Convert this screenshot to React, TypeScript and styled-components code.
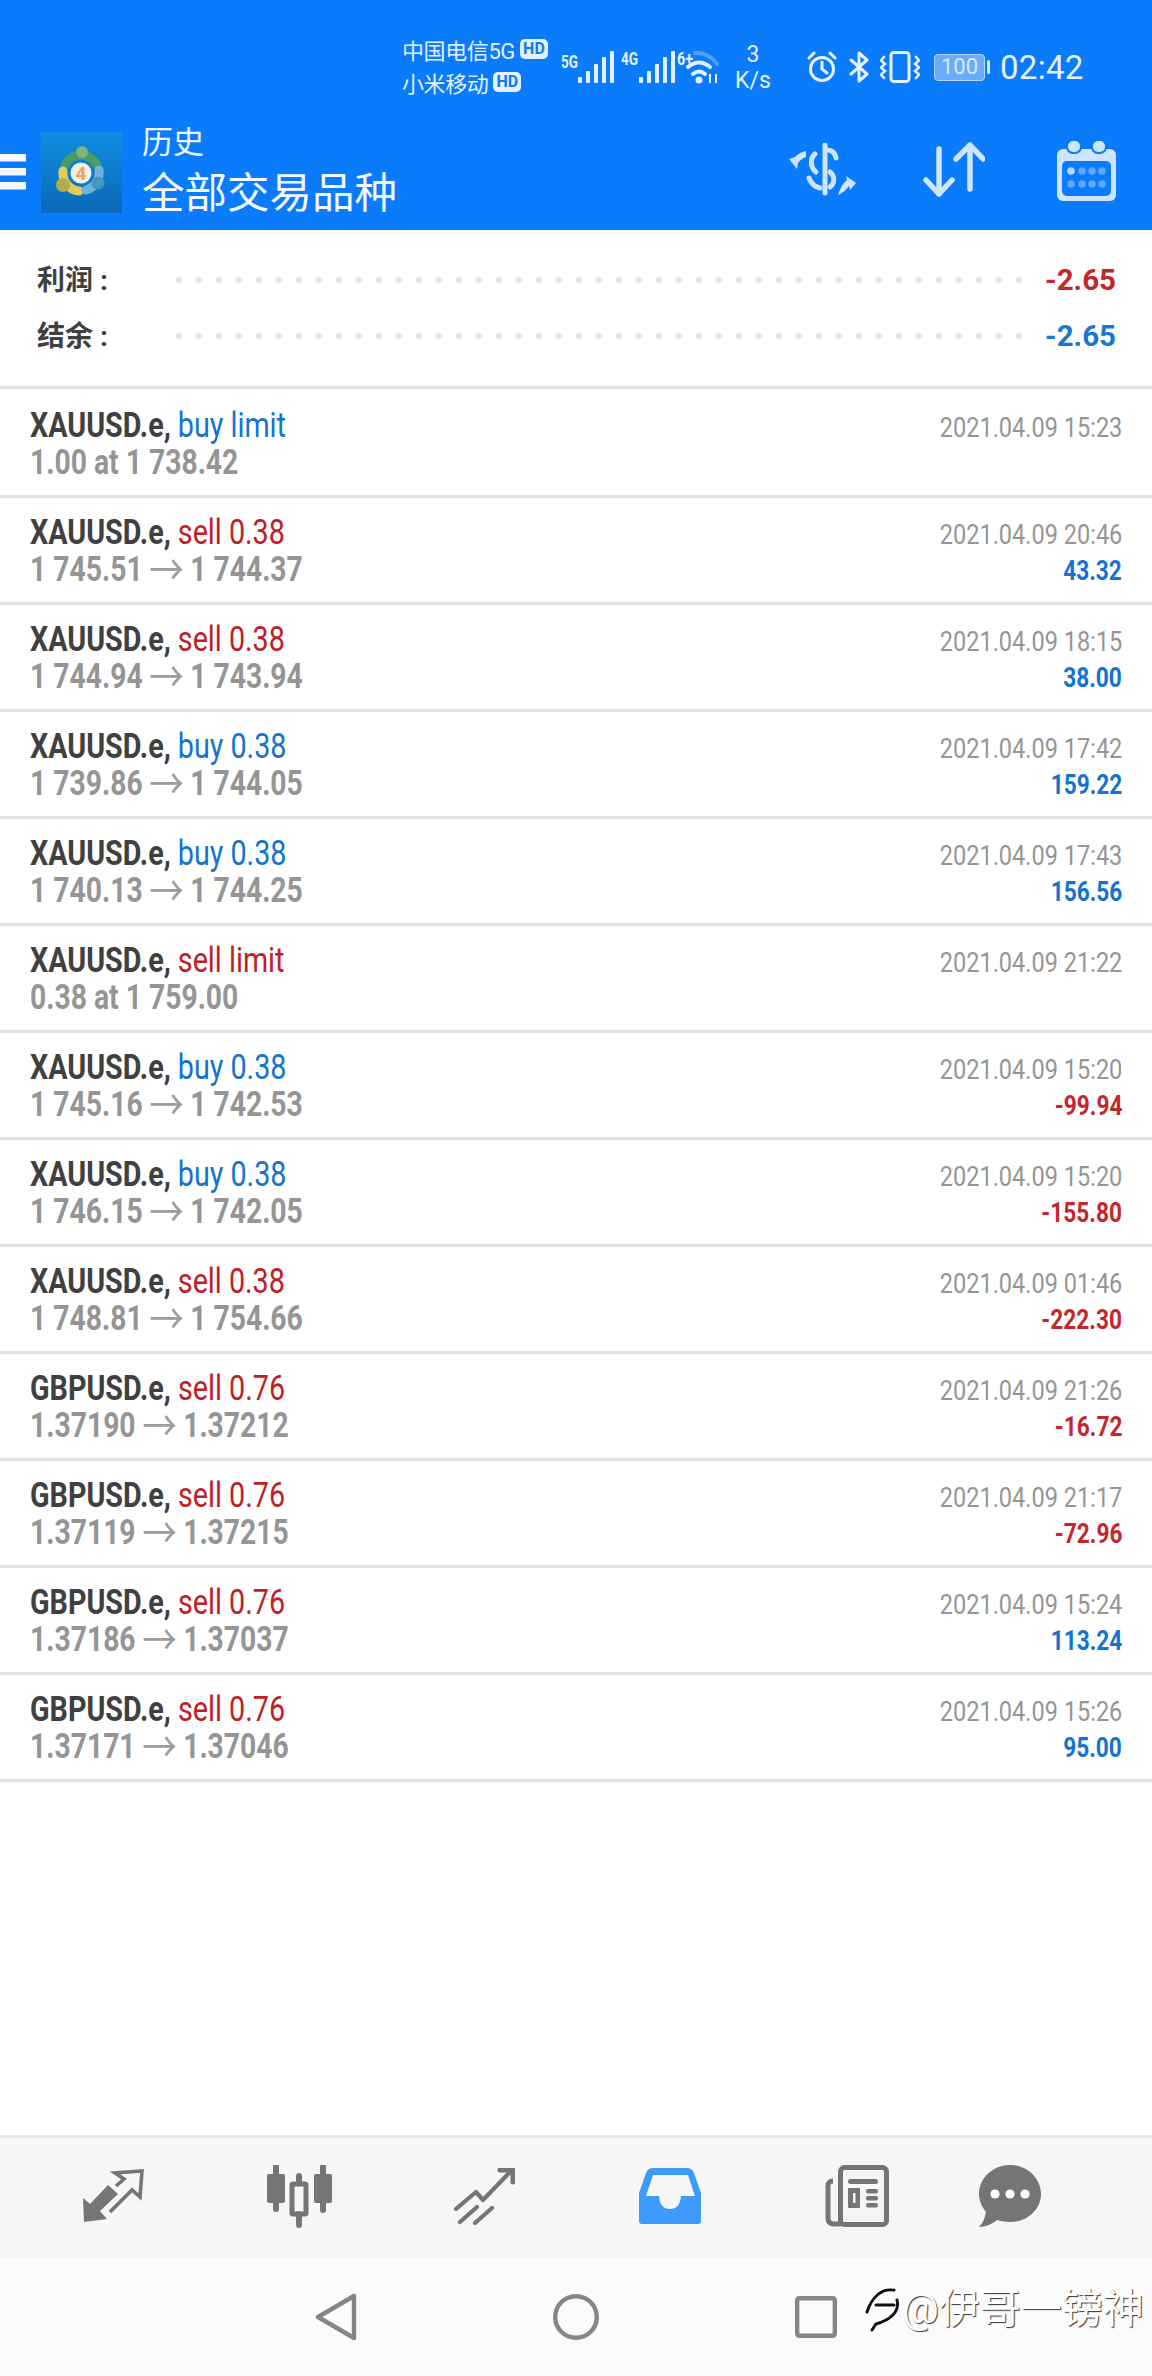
import React from "react";
import styled, { createGlobalStyle } from "styled-components";

const GlobalStyle = createGlobalStyle`
  html, body { margin: 0; padding: 0; background: #fff; }
  * { box-sizing: border-box; }
`;

type Order = {
  symbol: string;
  kind: string;
  buy: boolean;
  detail: string;
  time: string;
  profit?: string;
};

const orders: Order[] = [
  { symbol: "XAUUSD.e,", kind: "buy limit", buy: true, detail: "1.00 at 1 738.42", time: "2021.04.09 15:23" },
  { symbol: "XAUUSD.e,", kind: "sell 0.38", buy: false, detail: "1 745.51 → 1 744.37", time: "2021.04.09 20:46", profit: "43.32" },
  { symbol: "XAUUSD.e,", kind: "sell 0.38", buy: false, detail: "1 744.94 → 1 743.94", time: "2021.04.09 18:15", profit: "38.00" },
  { symbol: "XAUUSD.e,", kind: "buy 0.38", buy: true, detail: "1 739.86 → 1 744.05", time: "2021.04.09 17:42", profit: "159.22" },
  { symbol: "XAUUSD.e,", kind: "buy 0.38", buy: true, detail: "1 740.13 → 1 744.25", time: "2021.04.09 17:43", profit: "156.56" },
  { symbol: "XAUUSD.e,", kind: "sell limit", buy: false, detail: "0.38 at 1 759.00", time: "2021.04.09 21:22" },
  { symbol: "XAUUSD.e,", kind: "buy 0.38", buy: true, detail: "1 745.16 → 1 742.53", time: "2021.04.09 15:20", profit: "-99.94" },
  { symbol: "XAUUSD.e,", kind: "buy 0.38", buy: true, detail: "1 746.15 → 1 742.05", time: "2021.04.09 15:20", profit: "-155.80" },
  { symbol: "XAUUSD.e,", kind: "sell 0.38", buy: false, detail: "1 748.81 → 1 754.66", time: "2021.04.09 01:46", profit: "-222.30" },
  { symbol: "GBPUSD.e,", kind: "sell 0.76", buy: false, detail: "1.37190 → 1.37212", time: "2021.04.09 21:26", profit: "-16.72" },
  { symbol: "GBPUSD.e,", kind: "sell 0.76", buy: false, detail: "1.37119 → 1.37215", time: "2021.04.09 21:17", profit: "-72.96" },
  { symbol: "GBPUSD.e,", kind: "sell 0.76", buy: false, detail: "1.37186 → 1.37037", time: "2021.04.09 15:24", profit: "113.24" },
  { symbol: "GBPUSD.e,", kind: "sell 0.76", buy: false, detail: "1.37171 → 1.37046", time: "2021.04.09 15:26", profit: "95.00" },
];

const SignalIcons = () => (
  <svg width="160" height="34" viewBox="0 0 160 34">
    <g fill="#e4f0ff" fontFamily="Roboto, sans-serif" fontWeight="700" fontSize="19">
      <text x="0" y="18" textLength="17" lengthAdjust="spacingAndGlyphs">5G</text>
      <text x="60" y="15" textLength="17" lengthAdjust="spacingAndGlyphs">4G</text>
      <text x="116" y="15" textLength="16" lengthAdjust="spacingAndGlyphs">6+</text>
      <rect x="17" y="27" width="4" height="6" rx="1" />
      <rect x="25" y="21" width="4" height="12" rx="1" />
      <rect x="33" y="14" width="4" height="19" rx="1" />
      <rect x="41" y="7" width="4" height="26" rx="1" />
      <rect x="49" y="1" width="4" height="32" rx="1" />
      <rect x="78" y="27" width="4" height="6" rx="1" />
      <rect x="86" y="21" width="4" height="12" rx="1" />
      <rect x="94" y="14" width="4" height="19" rx="1" />
      <rect x="102" y="7" width="4" height="26" rx="1" />
      <rect x="110" y="1" width="4" height="32" rx="1" />
    </g>
    <g fill="none" strokeLinecap="round">
      <path d="M134 3 Q148 2 156 14" stroke="#4fa0fb" strokeWidth="4" />
      <path d="M127 17 Q138 8 149 17" stroke="#e4f0ff" strokeWidth="4" />
      <path d="M132 24 Q138 19 144 24" stroke="#e4f0ff" strokeWidth="4" />
    </g>
    <circle cx="138" cy="30" r="3.5" fill="#e4f0ff" />
    <path d="M149 24 v9 M155 24 v9" stroke="#e4f0ff" strokeWidth="2" />
  </svg>
);

const AlarmIcon = () => (
  <svg width="32" height="32" viewBox="0 0 32 32" fill="none" stroke="#e8f2ff" strokeWidth="3" strokeLinecap="round">
    <circle cx="16" cy="18" r="11.5" />
    <path d="M16 11 V18 L21 22" />
    <path d="M3 7 L8 2 M29 7 L24 2" />
  </svg>
);

const BluetoothIcon = () => (
  <svg width="20" height="32" viewBox="0 0 20 32" fill="none" stroke="#e8f2ff" strokeWidth="3" strokeLinejoin="round" strokeLinecap="round">
    <path d="M2 9 L18 23 L10 30 V2 L18 9 L2 23" />
  </svg>
);

const VibrateIcon = () => (
  <svg width="40" height="32" viewBox="0 0 40 32" fill="none" stroke="#e8f2ff" strokeWidth="2.6" strokeLinecap="round">
    <rect x="11" y="1.5" width="18" height="29" rx="3" strokeWidth="3" />
    <path d="M4 6 L1 9.5 L5 13 L1 16.5 L5 20 L1 23.5 L4 27" />
    <path d="M36 6 L39 9.5 L35 13 L39 16.5 L35 20 L39 23.5 L36 27" />
  </svg>
);

const MenuIcon = () => (
  <svg width="26" height="36" viewBox="0 0 26 36" fill="#f4f9ff">
    <rect y="0" width="26" height="7.5" />
    <rect y="14" width="26" height="7.5" />
    <rect y="28" width="26" height="7.5" />
  </svg>
);

const LogoIcon = () => (
  <svg width="81" height="81" viewBox="0 0 81 81">
    <defs>
      <linearGradient id="logoBg" x1="0" y1="0" x2="0" y2="1">
        <stop offset="0" stopColor="#0f8ee0" />
        <stop offset="1" stopColor="#0b68b8" />
      </linearGradient>
    </defs>
    <rect width="81" height="81" fill="url(#logoBg)" />
    <g fill="none" strokeWidth="9" strokeLinecap="round">
      <path d="M24 33 A18 18 0 0 1 56 33" stroke="#4f9a64" />
      <path d="M22 39 A18 18 0 0 0 38 59" stroke="#e2cc5c" />
      <path d="M58 38 A18 18 0 0 1 45 58" stroke="#6db4da" />
    </g>
    <circle cx="22" cy="53" r="7" fill="#b2ad4a" />
    <circle cx="57" cy="51" r="6.5" fill="#4594c2" />
    <circle cx="41" cy="20" r="6" fill="#7cb57d" />
    <circle cx="40" cy="41" r="10.5" fill="#f5efe3" />
    <text x="40" y="48" textAnchor="middle" fontFamily="Roboto, sans-serif" fontWeight="700" fontSize="19" fill="#eda25c">4</text>
  </svg>
);

const ProfitIcon = () => (
  <svg width="68" height="54" viewBox="0 0 68 54" fill="none" stroke="#cfe4ff" strokeLinecap="round">
    <path d="M36 2 V50" strokeWidth="5" />
    <path d="M38 7 C43 7 46 10 47 15" strokeWidth="5" />
    <path d="M26 11 C21 15 21 24 27 29" strokeWidth="5" />
    <path d="M41 29 C46 33 46 40 41 44" strokeWidth="5" />
    <path d="M20 35 C22 40 26 44 31 45" strokeWidth="5" />
    <path d="M17 8 C12 9 9 11 6 14 L0 16 L8 26 L9 20 C11 17 14 15 17 14 Z" fill="#cfe4ff" stroke="none" />
    <path d="M49 52 C54 50 57 47 60 43 L61 47 L67 40 L57 33 L58 37 C54 40 51 45 49 52 Z" fill="#cfe4ff" stroke="none" />
  </svg>
);

const SortIcon = () => (
  <svg width="62" height="56" viewBox="0 0 62 56" fill="none" stroke="#cfe4ff" strokeWidth="5.5" strokeLinecap="round" strokeLinejoin="round">
    <path d="M16 7 V52 M3 38 L16 52 L29 38" />
    <path d="M47 3 V47 M33 17 L47 3 L60 17" />
  </svg>
);

const CalendarIcon = () => (
  <svg width="59" height="61" viewBox="0 0 59 61">
    <rect x="0" y="9" width="59" height="52" rx="6" fill="#cfe4ff" />
    <rect x="10" y="0" width="14" height="13" rx="6" fill="#cfe4ff" stroke="#097bfb" strokeWidth="2" />
    <rect x="35" y="0" width="14" height="13" rx="6" fill="#cfe4ff" stroke="#097bfb" strokeWidth="2" />
    <rect x="5" y="21" width="49" height="35" rx="5" fill="#097bfb" />
    {[31, 44].map((y) =>
      [14, 25, 35, 45].map((x) => (
        <circle key={`${x}-${y}`} cx={x} cy={y} r="3.8" fill={x === 14 && y === 31 ? "#b6d7ff" : "#5fa8fb"} />
      ))
    )}
  </svg>
);

const ExchangeIcon = () => (
  <svg width="62" height="54" viewBox="0 0 62 54">
    <path d="M0 29 L7 35 L25 16 L35 25 L17 42 L24 50 L1 53 Z" fill="#757575" />
    <polyline points="33,17 41,10 32,4 59,2 57,28 49,21 27,43" fill="none" stroke="#757575" strokeWidth="3.6" />
  </svg>
);

const CandlesIcon = () => (
  <svg width="65" height="63" viewBox="0 0 65 63" fill="#757575" stroke="#757575">
    <path d="M9 2 V44" strokeWidth="6" strokeLinecap="round" />
    <rect x="0" y="9" width="18" height="29" rx="2" strokeWidth="0" />
    <path d="M56 2 V45" strokeWidth="6" strokeLinecap="round" />
    <rect x="47" y="9" width="18" height="29" rx="2" strokeWidth="0" />
    <path d="M32 11 V17 M32 49 V60" strokeWidth="6" strokeLinecap="round" />
    <rect x="25" y="19" width="14" height="30" rx="1" fill="none" strokeWidth="5" />
  </svg>
);

const ChartIcon = () => (
  <svg width="61" height="57" viewBox="0 0 61 57" fill="none" stroke="#757575" strokeWidth="4.2" strokeLinecap="round" strokeLinejoin="round">
    <path d="M2 41 L22 24 L29 32 L56 4" />
    <path d="M46 2 H59 V14" strokeWidth="5" />
    <path d="M6 54 L23 39 M21 55 L38 40" />
  </svg>
);

const InboxIcon = () => (
  <svg width="62" height="56" viewBox="0 0 62 56">
    <path
      fillRule="evenodd"
      fill="#3f9bfb"
      d="M14 0 H48 Q53 0 55 5 L62 25 V53 Q62 56 59 56 H3 Q0 56 0 53 V25 L7 5 Q9 0 14 0 Z M14 7 L7 28 H20 Q21 41 31 41 Q41 41 42 28 H56 L49 7 Z"
    />
  </svg>
);

const NewsIcon = () => (
  <svg width="64" height="62" viewBox="0 0 64 62">
    <rect x="15.5" y="2.5" width="46" height="57" rx="4" fill="none" stroke="#757575" strokeWidth="5" />
    <path d="M8 16 Q3 16 3 21 V53 Q3 59 9 59 H16" fill="none" stroke="#757575" strokeWidth="5" />
    <rect x="23" y="14" width="30" height="5" rx="2.5" fill="#757575" />
    <rect x="23" y="23" width="12" height="20" rx="1" fill="#757575" />
    <rect x="28" y="28" width="2.5" height="10" fill="#f6f6f6" />
    <rect x="41" y="24" width="12" height="4.5" rx="2" fill="#757575" />
    <rect x="41" y="31" width="12" height="4.5" rx="2" fill="#757575" />
    <rect x="41" y="38" width="12" height="4.5" rx="2" fill="#757575" />
  </svg>
);

const ChatIcon = () => (
  <svg width="62" height="62" viewBox="0 0 62 62">
    <path d="M31 0 C48 0 62 13 62 29 C62 45 48 57 31 57 C26 57 22 56 18 55 C13 59 7 62 0 62 C4 58 6 53 7 47 C3 42 0 36 0 29 C0 13 14 0 31 0 Z" fill="#757575" />
    <circle cx="16" cy="29" r="4.6" fill="#fff" />
    <circle cx="31" cy="29" r="4.6" fill="#fff" />
    <circle cx="46" cy="29" r="4.6" fill="#fff" />
  </svg>
);

const BackIcon = () => (
  <svg width="42" height="48" viewBox="0 0 42 48" fill="none" stroke="#858585" strokeWidth="4.4" strokeLinejoin="round">
    <path d="M3 24 L39 3 V45 Z" />
  </svg>
);

const HomeIcon = () => (
  <svg width="46" height="46" viewBox="0 0 46 46" fill="none" stroke="#858585" strokeWidth="4.4">
    <circle cx="23" cy="23" r="20.8" />
  </svg>
);

const RecentIcon = () => (
  <svg width="42" height="42" viewBox="0 0 42 42" fill="none" stroke="#858585" strokeWidth="4.4" strokeLinejoin="round">
    <rect x="2.2" y="2.2" width="37.6" height="37.6" rx="2" />
  </svg>
);

const WeiboIcon = () => (
  <svg width="36" height="46" viewBox="0 0 36 46" fill="none" strokeLinecap="round">
    <g stroke="#111" strokeWidth="3">
      <path d="M30 4 C18 2 8 10 3 26" />
      <path d="M12 19 H30" />
      <path d="M33 14 C36 26 26 34 12 38 L8 44" />
    </g>
    <g stroke="#fff" strokeWidth="1.2">
      <path d="M30 2 C18 0 8 8 1 24" />
    </g>
  </svg>
);

export default function App() {
  return (
    <Page>
      <GlobalStyle />
      <Header>
        <StatusBar>
          <Carriers>
            <CarrierLine>
              中国电信5G<HdBadge>HD</HdBadge>
            </CarrierLine>
            <CarrierLine>
              小米移动<HdBadge>HD</HdBadge>
            </CarrierLine>
          </Carriers>
          <SignalIcons />
          <Speed>
            <span>3</span>
            <span>K/s</span>
          </Speed>
          <StatusIcons>
            <AlarmIcon />
            <BluetoothIcon />
            <VibrateIcon />
          </StatusIcons>
          <Battery>
            <BatteryBody>100</BatteryBody>
            <BatteryTip />
          </Battery>
          <Clock>02:42</Clock>
        </StatusBar>
        <AppBar>
          <MenuIcon />
          <Logo>
            <LogoIcon />
          </Logo>
          <Titles>
            <SubTitle>历史</SubTitle>
            <MainTitle>全部交易品种</MainTitle>
          </Titles>
          <Actions>
            <ProfitIcon />
            <SortIcon />
            <CalendarIcon />
          </Actions>
        </AppBar>
      </Header>

      <Summary>
        <SummaryRow>
          <SummaryLabel>利润 :</SummaryLabel>
          <Dots />
          <SummaryValue $color="#c4262c">-2.65</SummaryValue>
        </SummaryRow>
        <SummaryRow>
          <SummaryLabel>结余 :</SummaryLabel>
          <Dots />
          <SummaryValue $color="#1877d2">-2.65</SummaryValue>
        </SummaryRow>
      </Summary>

      <OrderList>
        {orders.map((o, i) => {
          const parts = o.detail.split(" → ");
          return (
            <OrderRow key={i}>
              <LeftCol>
                <Line>
                  <Symbol>{o.symbol}</Symbol> <Kind $buy={o.buy}>{o.kind}</Kind>
                </Line>
                <Line>
                  <Detail>
                    {parts[0]}
                    {parts.length > 1 && <ArrowGlyph>→</ArrowGlyph>}
                    {parts[1]}
                  </Detail>
                </Line>
              </LeftCol>
              <RightCol>
                <RightLine>
                  <Time>{o.time}</Time>
                </RightLine>
                {o.profit && (
                  <RightLine>
                    <Profit $loss={o.profit.startsWith("-")}>{o.profit}</Profit>
                  </RightLine>
                )}
              </RightCol>
            </OrderRow>
          );
        })}
      </OrderList>

      <TabBar>
        <Tab $left={83}><ExchangeIcon /></Tab>
        <Tab $left={122}><CandlesIcon /></Tab>
        <Tab $left={122}><ChartIcon /></Tab>
        <Tab $left={124}><InboxIcon /></Tab>
        <Tab $left={124}><NewsIcon /></Tab>
        <Tab $left={90}><ChatIcon /></Tab>
      </TabBar>

      <NavBar>
        <BackIcon />
        <HomeIcon />
        <RecentIcon />
        <Watermark>
          <WeiboIcon />
          <span>@伊哥一镑神</span>
        </Watermark>
      </NavBar>
    </Page>
  );
}

const Page = styled.div`
  width: 1152px;
  height: 2376px;
  display: flex;
  flex-direction: column;
  background: #fff;
  overflow: hidden;
  font-family: Roboto, "Noto Sans CJK SC", sans-serif;
`;

const Header = styled.header`
  height: 230px;
  background: #097bfb;
  color: #fff;
`;

const StatusBar = styled.div`
  height: 120px;
  padding: 14px 0 0 402px;
  display: flex;
  align-items: center;
`;

const Carriers = styled.div`
  width: 159px;
  margin-top: -4px;
  display: flex;
  flex-direction: column;
`;

const CarrierLine = styled.div`
  display: flex;
  align-items: center;
  height: 33px;
  font-size: 22px;
  letter-spacing: -0.4px;
  color: #e4f0ff;
  white-space: nowrap;
`;

const HdBadge = styled.span`
  margin-left: 5px;
  width: 28px;
  height: 20px;
  border-radius: 5px;
  background: #e4f0ff;
  color: #097bfb;
  font: 700 16px/20px Roboto, sans-serif;
  letter-spacing: 0;
  text-align: center;
`;

const Speed = styled.div`
  width: 40px;
  margin-left: 12px;
  display: flex;
  flex-direction: column;
  align-items: center;
  gap: 3px;
  font-size: 23px;
  line-height: 23px;
  color: #e4f0ff;
`;

const StatusIcons = styled.div`
  margin-left: 33px;
  display: flex;
  align-items: center;
  gap: 11px;
`;

const Battery = styled.div`
  margin-left: 14px;
  display: flex;
  align-items: center;
  gap: 2px;
`;

const BatteryBody = styled.div`
  width: 51px;
  height: 27px;
  border: 1.5px solid #b5d6ff;
  border-radius: 4px;
  background: #6aacfb;
  color: #d8e9ff;
  font-size: 22px;
  line-height: 24px;
  text-align: center;
`;

const BatteryTip = styled.div`
  width: 3px;
  height: 14px;
  border-radius: 2px;
  background: #d8e9ff;
`;

const Clock = styled.div`
  margin-left: 10px;
  font-size: 33px;
  color: #e8f2ff;
  letter-spacing: 0.3px;
`;

const AppBar = styled.div`
  height: 110px;
  display: flex;
  align-items: center;
  position: relative;
  padding-bottom: 6px;
`;

const Logo = styled.div`
  margin-left: 15px;
  width: 81px;
  height: 81px;
  line-height: 0;
`;

const Titles = styled.div`
  margin-left: 20px;
  padding-bottom: 3px;
  display: flex;
  flex-direction: column;
  gap: 6px;
`;

const SubTitle = styled.div`
  font-size: 31px;
  line-height: 40px;
  color: #f0f6ff;
`;

const MainTitle = styled.div`
  font-size: 42.5px;
  line-height: 50px;
  color: #f4f9ff;
`;

const Actions = styled.div`
  margin-left: auto;
  padding: 0 36px 4px 0;
  display: flex;
  align-items: center;
  gap: 72px;

  svg:first-child {
    margin-right: -6px;
  }
`;

const Summary = styled.section`
  height: 159px;
  padding: 22px 36px 0 37px;
  border-bottom: 3px solid #e2e2e2;
  display: flex;
  flex-direction: column;
`;

const SummaryRow = styled.div`
  height: 56px;
  display: flex;
  align-items: center;
`;

const SummaryLabel = styled.div`
  width: 139px;
  padding-bottom: 4px;
  font-size: 28px;
  font-weight: 700;
  color: #404040;
  white-space: pre;
`;

const Dots = styled.div`
  width: 850px;
  height: 6px;
  background-image: radial-gradient(circle at 3px 3px, #e4e4e4 2.8px, transparent 3.2px);
  background-size: 20px 6px;
  background-repeat: repeat-x;
`;

const SummaryValue = styled.div<{ $color: string }>`
  margin-left: auto;
  font-size: 29.5px;
  font-weight: 700;
  color: ${(p) => p.$color};
`;

const OrderList = styled.div`
  flex: 1;
  padding-top: 2px;
`;

const OrderRow = styled.div`
  height: 107px;
  padding: 16px 30px 0;
  border-bottom: 3px solid #e2e2e2;
  display: flex;
  justify-content: space-between;
`;

const LeftCol = styled.div`
  display: flex;
  flex-direction: column;
`;

const Line = styled.div`
  height: 37px;
  line-height: 37px;
  font-size: 35px;
  white-space: nowrap;
  transform: scaleX(0.82);
  transform-origin: left center;
`;

const Symbol = styled.span`
  font-weight: 700;
  color: #404040;
`;

const Kind = styled.span<{ $buy: boolean }>`
  color: ${(p) => (p.$buy ? "#1473d0" : "#be2026")};
`;

const Detail = styled.span`
  font-size: 34.5px;
  font-weight: 700;
  color: #959595;
`;

const ArrowGlyph = styled.span`
  margin: 0 8px;
  font-size: 42px;
  font-weight: 400;
  line-height: 0;
  vertical-align: -4px;
  color: #9d9d9d;
`;

const RightCol = styled.div`
  padding-top: 2px;
  display: flex;
  flex-direction: column;
  align-items: flex-end;
`;

const RightLine = styled.div`
  height: 37px;
  line-height: 37px;
  white-space: nowrap;
  transform: scaleX(0.84);
  transform-origin: right center;
`;

const Time = styled.span`
  font-size: 28px;
  color: #959595;
`;

const Profit = styled.span<{ $loss: boolean }>`
  font-size: 27px;
  font-weight: 700;
  color: ${(p) => (p.$loss ? "#c4262c" : "#1473d0")};
`;

const TabBar = styled.nav`
  height: 123px;
  padding-bottom: 4px;
  background: #f6f6f6;
  border-top: 3px solid #e6e6e6;
  display: flex;
  align-items: center;
`;

const Tab = styled.div<{ $left: number }>`
  margin-left: ${(p) => p.$left}px;
  line-height: 0;
`;

const NavBar = styled.div`
  height: 118px;
  position: relative;
  background: #fbfbfb;
  padding: 0 315px;
  display: flex;
  align-items: center;
  justify-content: space-between;
`;

const Watermark = styled.div`
  position: absolute;
  left: 864px;
  top: 26px;
  display: flex;
  align-items: center;
  gap: 2px;
  font-size: 41px;
  line-height: 50px;
  color: #fff;
  text-shadow: 1px 1px 1px #333;
  white-space: nowrap;
`;
